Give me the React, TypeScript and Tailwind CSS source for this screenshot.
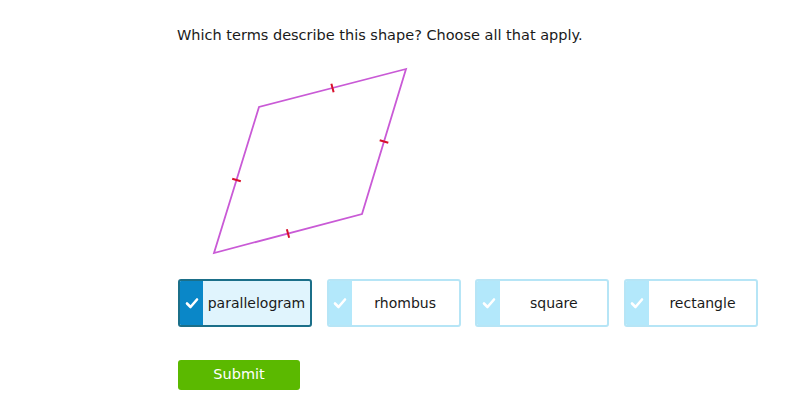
import React from 'react';

const options = [
  { label: 'parallelogram', selected: true },
  { label: 'rhombus', selected: false },
  { label: 'square', selected: false },
  { label: 'rectangle', selected: false },
];

const Check = () => (
  <svg width="14" height="12" viewBox="0 0 14 12">
    <path d="M2 6.5 L5.5 10 L12 2.5" fill="none" stroke="white" strokeWidth="2.6" strokeLinecap="round" strokeLinejoin="round" />
  </svg>
);

// tick mark drawn perpendicular to an edge at its midpoint
const tick = (x1: number, y1: number, x2: number, y2: number) => {
  const mx = (x1 + x2) / 2;
  const my = (y1 + y2) / 2;
  const dx = x2 - x1;
  const dy = y2 - y1;
  const len = Math.hypot(dx, dy);
  const nx = (-dy / len) * 4.5;
  const ny = (dx / len) * 4.5;
  return <line x1={mx - nx} y1={my - ny} x2={mx + nx} y2={my + ny} stroke="#d8102c" strokeWidth="2" />;
};

const App = () => {
  const pts: [number, number][] = [
    [406, 69],
    [259, 107],
    [214, 253],
    [362, 214],
  ];

  return (
    <div className="w-[800px] h-[402px] bg-white" style={{ fontFamily: '"DejaVu Sans", Verdana, sans-serif' }}>
      <div className="pl-[177px] pt-[26px] text-[14.5px] text-[#1a1a1a] leading-[18px]">
        Which terms describe this shape? Choose all that apply.
      </div>

      {/* figure */}
      <div className="h-[224px] mt-[12px]">
        <svg width="800" height="224" viewBox="0 56 800 224">
          <polygon
            points={pts.map((p) => p.join(',')).join(' ')}
            fill="none"
            stroke="#c95ad6"
            strokeWidth="1.8"
          />
          {pts.map((p, i) => {
            const q = pts[(i + 1) % pts.length];
            return <g key={i}>{tick(p[0], p[1], q[0], q[1])}</g>;
          })}
        </svg>
      </div>

      {/* choices */}
      <div className="flex gap-[14.67px] pl-[178px] mt-[-1px]">
        {options.map((o) =>
          o.selected ? (
            <div
              key={o.label}
              className="flex w-[134px] h-[48px] rounded-[3px] border-2 border-[#1b6f89] bg-[#e0f4fd] overflow-hidden"
            >
              <div className="w-[23px] bg-[#0a87c8] flex items-center justify-center">
                <Check />
              </div>
              <div className="flex-1 flex items-center justify-center text-[14px] text-[#1a1a1a]">{o.label}</div>
            </div>
          ) : (
            <div
              key={o.label}
              className="flex w-[134px] h-[48px] rounded-[3px] border-2 border-[#b6e5f6] bg-white overflow-hidden"
            >
              <div className="w-[23px] bg-[#b3e8fb] flex items-center justify-center">
                <Check />
              </div>
              <div className="flex-1 flex items-center justify-center text-[14px] text-[#1a1a1a]">{o.label}</div>
            </div>
          )
        )}
      </div>

      <div className="pl-[178px] mt-[33px]">
        <button className="w-[122px] h-[30px] rounded-[3px] bg-[#5bb900] text-white text-[14.5px] flex items-center justify-center">
          Submit
        </button>
      </div>
    </div>
  );
};

export default App;
